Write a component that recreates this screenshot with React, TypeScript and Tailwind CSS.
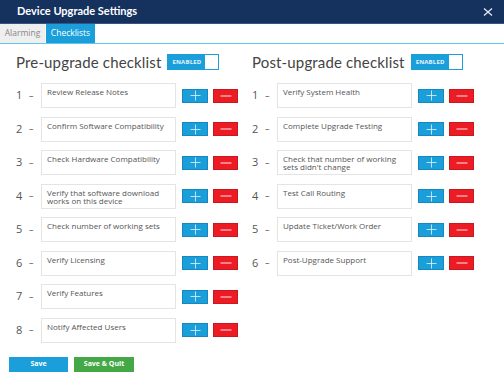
import React from "react";

const pre = [
  "Review Release Notes",
  "Confirm Software Compatibility",
  "Check Hardware Compatibility",
  "Verify that software download works on this device",
  "Check number of working sets",
  "Verify Licensing",
  "Verify Features",
  "Notify Affected Users",
];
const post = [
  "Verify System Health",
  "Complete Upgrade Testing",
  "Check that number of working sets didn't change",
  "Test Call Routing",
  "Update Ticket/Work Order",
  "Post-Upgrade Support",
];

function Toggle() {
  return (
    <div className="flex h-[16px] w-[52px] items-stretch border border-[#1a9fdb] bg-[#1a9fdb]">
      <div className="flex flex-1 items-center pl-[4px] text-[6px] font-bold tracking-[0.2px] text-white/90">ENABLED</div>
      <div className="w-[13px] bg-white" />
    </div>
  );
}

function Row({ n, text }: { n: number; text: string }) {
  return (
    <div className="flex h-[25px] items-center">
      <div className="flex w-[25px] items-center text-[11px] text-[#555]">
        <span className="w-[13px]">{n}</span>
        <span className="text-[9px]">–</span>
      </div>
      <div className="h-[25px] w-[135px] border border-[#e4e4e4] bg-white px-[5px] pt-[4px] text-[8px] leading-[8px] text-[#555]">
        {text}
      </div>
      <button className="ml-[6px] flex h-[14px] w-[26px] items-center justify-center border border-[#1688c0] bg-[#1a9fdb]">
        <svg width="11" height="11" viewBox="0 0 11 11">
          <path d="M5.5 0.5V10.5M0.5 5.5H10.5" stroke="#e6f4fb" strokeWidth="0.8" />
        </svg>
      </button>
      <button className="ml-[5px] flex h-[14px] w-[25px] items-center justify-center border border-[#c81820] bg-[#ed1c24]">
        <svg width="12" height="4" viewBox="0 0 12 4">
          <path d="M0.5 2H11.5" stroke="#fde8e8" strokeWidth="1" />
        </svg>
      </button>
    </div>
  );
}

function Column({ title, items }: { title: string; items: string[] }) {
  return (
    <div className="flex w-[236px] flex-col">
      <div className="flex h-[16px] items-center">
        <h2 className="text-[15px] leading-[16px] tracking-[0.15px] text-[#444]" style={{ fontFamily: "Lato, 'Open Sans', sans-serif" }}>{title}</h2>
        <div className="ml-[6px]">
          <Toggle />
        </div>
      </div>
      <div className="mt-[13px] flex flex-col gap-[8.5px]">
        {items.map((t, i) => (
          <Row key={i} n={i + 1} text={t} />
        ))}
      </div>
    </div>
  );
}

export default function App() {
  return (
    <div className="relative h-[381px] w-[504px] overflow-hidden bg-white" style={{ fontFamily: "'Open Sans', 'Liberation Sans', sans-serif" }}>
      <div className="flex h-[24px] items-center justify-between border-b border-[#3a5380] bg-[#15325f] pl-[17px] pr-[11px]">
        <span className="text-[11px] font-bold text-white" style={{ fontFamily: "Lato, 'Open Sans', sans-serif" }}>Device Upgrade Settings</span>
        <svg width="10" height="8" viewBox="0 0 10 8">
          <path d="M1 0.5L9 7.5M9 0.5L1 7.5" stroke="#e8eef8" strokeWidth="1.2" />
        </svg>
      </div>
      <div className="flex h-[20px] border-b border-[#5fc6ee]">
        <div className="flex w-[45px] items-center justify-center bg-[#efefef] text-[8.5px] text-[#888]">Alarming</div>
        <div className="ml-[1px] flex w-[49px] items-center justify-center bg-[#1a9fdb] text-[8.5px] text-white">Checklists</div>
      </div>
      <div className="flex pl-[16px] pt-[10px]">
        <Column title="Pre-upgrade checklist" items={pre} />
        <Column title="Post-upgrade checklist" items={post} />
      </div>
      <div className="mt-[14px] flex gap-[6px] pl-[9px]">
        <button className="h-[15px] w-[59px] bg-[#1a9fdb] text-[7px] font-bold text-white">Save</button>
        <button className="h-[15px] w-[60px] bg-[#45a847] text-[7px] font-bold text-white">Save &amp; Quit</button>
      </div>
    </div>
  );
}
